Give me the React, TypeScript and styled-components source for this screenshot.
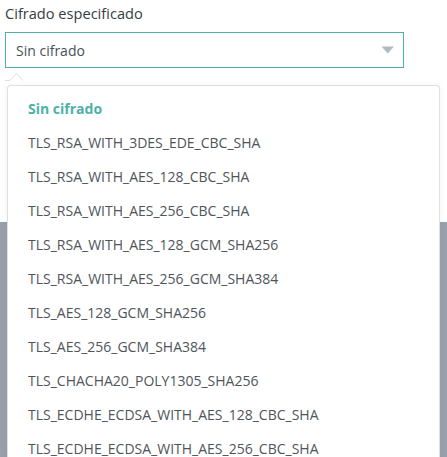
import React from "react";
import styled, { createGlobalStyle } from "styled-components";

const Global = createGlobalStyle`
  html, body { margin: 0; padding: 0; }
  body {
    background: #98a0ac;
    font-family: "Open Sans", "Noto Sans", sans-serif;
    width: 447px;
    height: 457px;
    overflow: hidden;
  }
`;

const Page = styled.div`
  position: relative;
  width: 447px;
  height: 457px;
`;

const Card = styled.div`
  background: #ffffff;
  height: 222px;
  padding: 2px 43px 0 5px;
  box-sizing: border-box;
  display: flex;
  flex-direction: column;
`;

const Label = styled.div`
  font-size: 14.6px;
  line-height: 22px;
  font-weight: 400;
  color: #363c44;
  margin-bottom: 8px;
`;

const SelectBox = styled.div`
  height: 36px;
  box-sizing: border-box;
  border: 1px solid #4db1a7;
  display: flex;
  align-items: center;
  justify-content: space-between;
  padding: 0 8px 0 10px;
  font-size: 14px;
  color: #4a4f56;
`;

const Caret = styled.svg`
  display: block;
`;

const PopArrow = styled.svg`
  position: absolute;
  left: 5px;
  top: 71px;
`;

const Menu = styled.ul`
  position: absolute;
  top: 85px;
  left: 7px;
  width: 433px;
  box-sizing: border-box;
  margin: 0;
  padding: 5px 0 0;
  list-style: none;
  background: #ffffff;
  border: 1px solid #dcdfe3;
  border-bottom: none;
  border-radius: 4px 4px 0 0;
  box-shadow: 0 1px 6px rgba(0, 0, 0, 0.06);
  height: 372px;
  overflow: hidden;
`;

const Item = styled.li<{ $selected?: boolean }>`
  height: 34px;
  display: flex;
  align-items: center;
  padding-left: 20px;
  font-size: 14px;
  color: ${(p) => (p.$selected ? "#4db1a7" : "#4f545b")};
  font-weight: ${(p) => (p.$selected ? 700 : 400)};
  white-space: nowrap;
`;

const options = [
  "Sin cifrado",
  "TLS_RSA_WITH_3DES_EDE_CBC_SHA",
  "TLS_RSA_WITH_AES_128_CBC_SHA",
  "TLS_RSA_WITH_AES_256_CBC_SHA",
  "TLS_RSA_WITH_AES_128_GCM_SHA256",
  "TLS_RSA_WITH_AES_256_GCM_SHA384",
  "TLS_AES_128_GCM_SHA256",
  "TLS_AES_256_GCM_SHA384",
  "TLS_CHACHA20_POLY1305_SHA256",
  "TLS_ECDHE_ECDSA_WITH_AES_128_CBC_SHA",
  "TLS_ECDHE_ECDSA_WITH_AES_256_CBC_SHA",
];

export default function App() {
  return (
    <Page>
      <Global />
      <Card>
        <Label>Cifrado especificado</Label>
        <SelectBox>
          <span>Sin cifrado</span>
          <Caret width="14" height="8" viewBox="0 0 14 8">
            <path d="M0.5 0.5 H13 L6.75 7.5 Z" fill="#b3b8c2" />
          </Caret>
        </SelectBox>
      </Card>
      <PopArrow width="22" height="12" viewBox="0 0 22 12">
        <path d="M0 9.5 H5 L11.5 2.5 L18 9.5" fill="#ffffff" stroke="#dcdfe3" strokeWidth="1" />
      </PopArrow>
      <Menu>
        {options.map((o, i) => (
          <Item key={o} $selected={i === 0}>
            {o}
          </Item>
        ))}
      </Menu>
    </Page>
  );
}
